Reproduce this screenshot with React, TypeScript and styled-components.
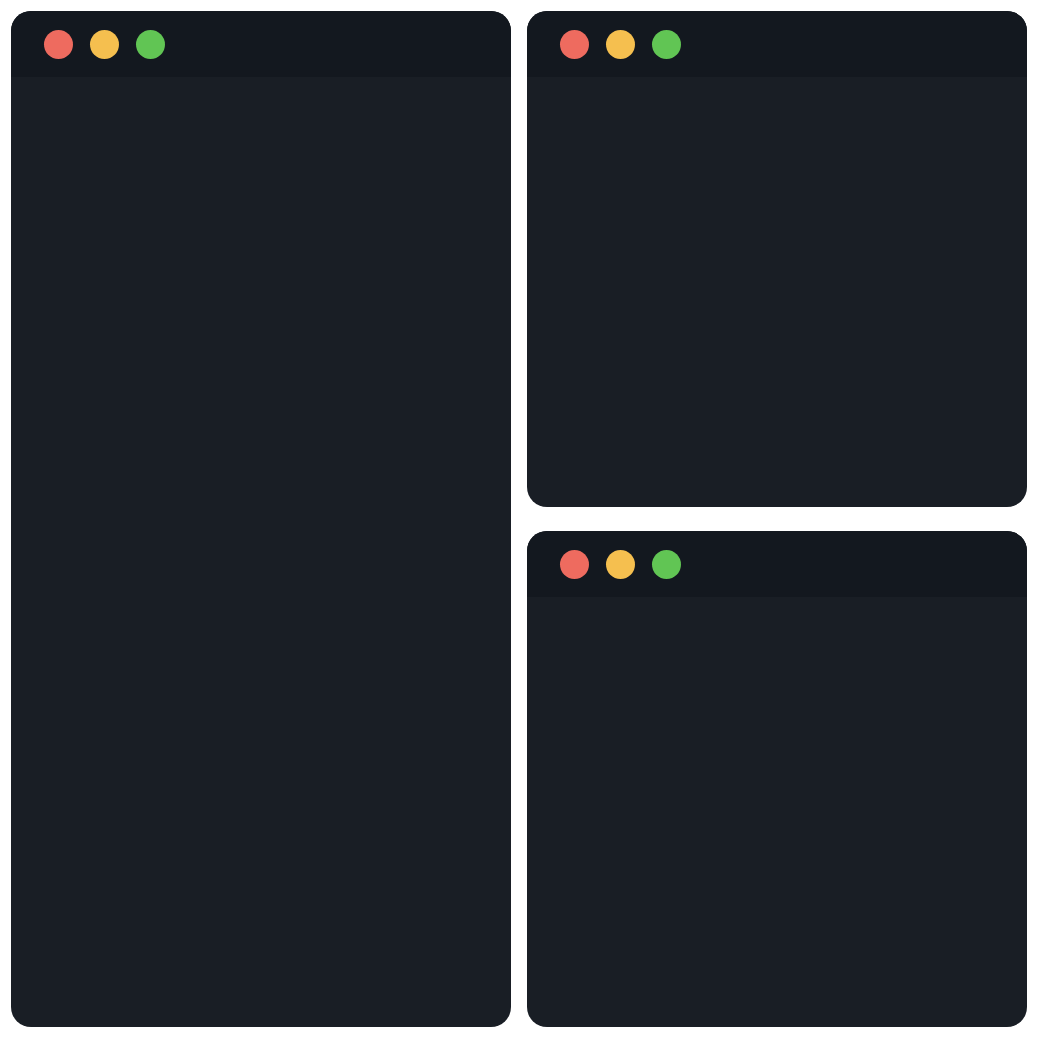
import React from "react";
import styled, { createGlobalStyle } from "styled-components";

const Global = createGlobalStyle`
  html, body { margin: 0; padding: 0; background: #ffffff; font-family: "Liberation Sans", Arial, sans-serif; }
`;

const Page = styled.div`
  box-sizing: border-box;
  width: 1038px;
  height: 1038px;
  padding: 11px;
  display: grid;
  grid-template-columns: 500px 500px;
  grid-template-rows: 496px 496px;
  column-gap: 16px;
  row-gap: 24px;
`;

const Window = styled.div<{ $tall?: boolean }>`
  grid-row: ${(p) => (p.$tall ? "1 / span 2" : "auto")};
  background: #191e25;
  border-radius: 20px;
  overflow: hidden;
  display: flex;
  flex-direction: column;
`;

const TitleBar = styled.div`
  height: 66px;
  flex-shrink: 0;
  background: #13181f;
  display: flex;
  align-items: center;
  gap: 17px;
  padding-left: 33px;
  box-sizing: border-box;
`;

const Dot = styled.span<{ $color: string }>`
  width: 29px;
  height: 29px;
  border-radius: 50%;
  background: ${(p) => p.$color};
`;

const Body = styled.div`
  flex: 1;
`;

const Win = ({ tall }: { tall?: boolean }) => (
  <Window $tall={tall}>
    <TitleBar>
      <Dot $color="#ee6b5f" />
      <Dot $color="#f5bf4f" />
      <Dot $color="#61c554" />
    </TitleBar>
    <Body />
  </Window>
);

export default function App() {
  return (
    <>
      <Global />
      <Page>
        <Win tall />
        <Win />
        <Win />
      </Page>
    </>
  );
}
